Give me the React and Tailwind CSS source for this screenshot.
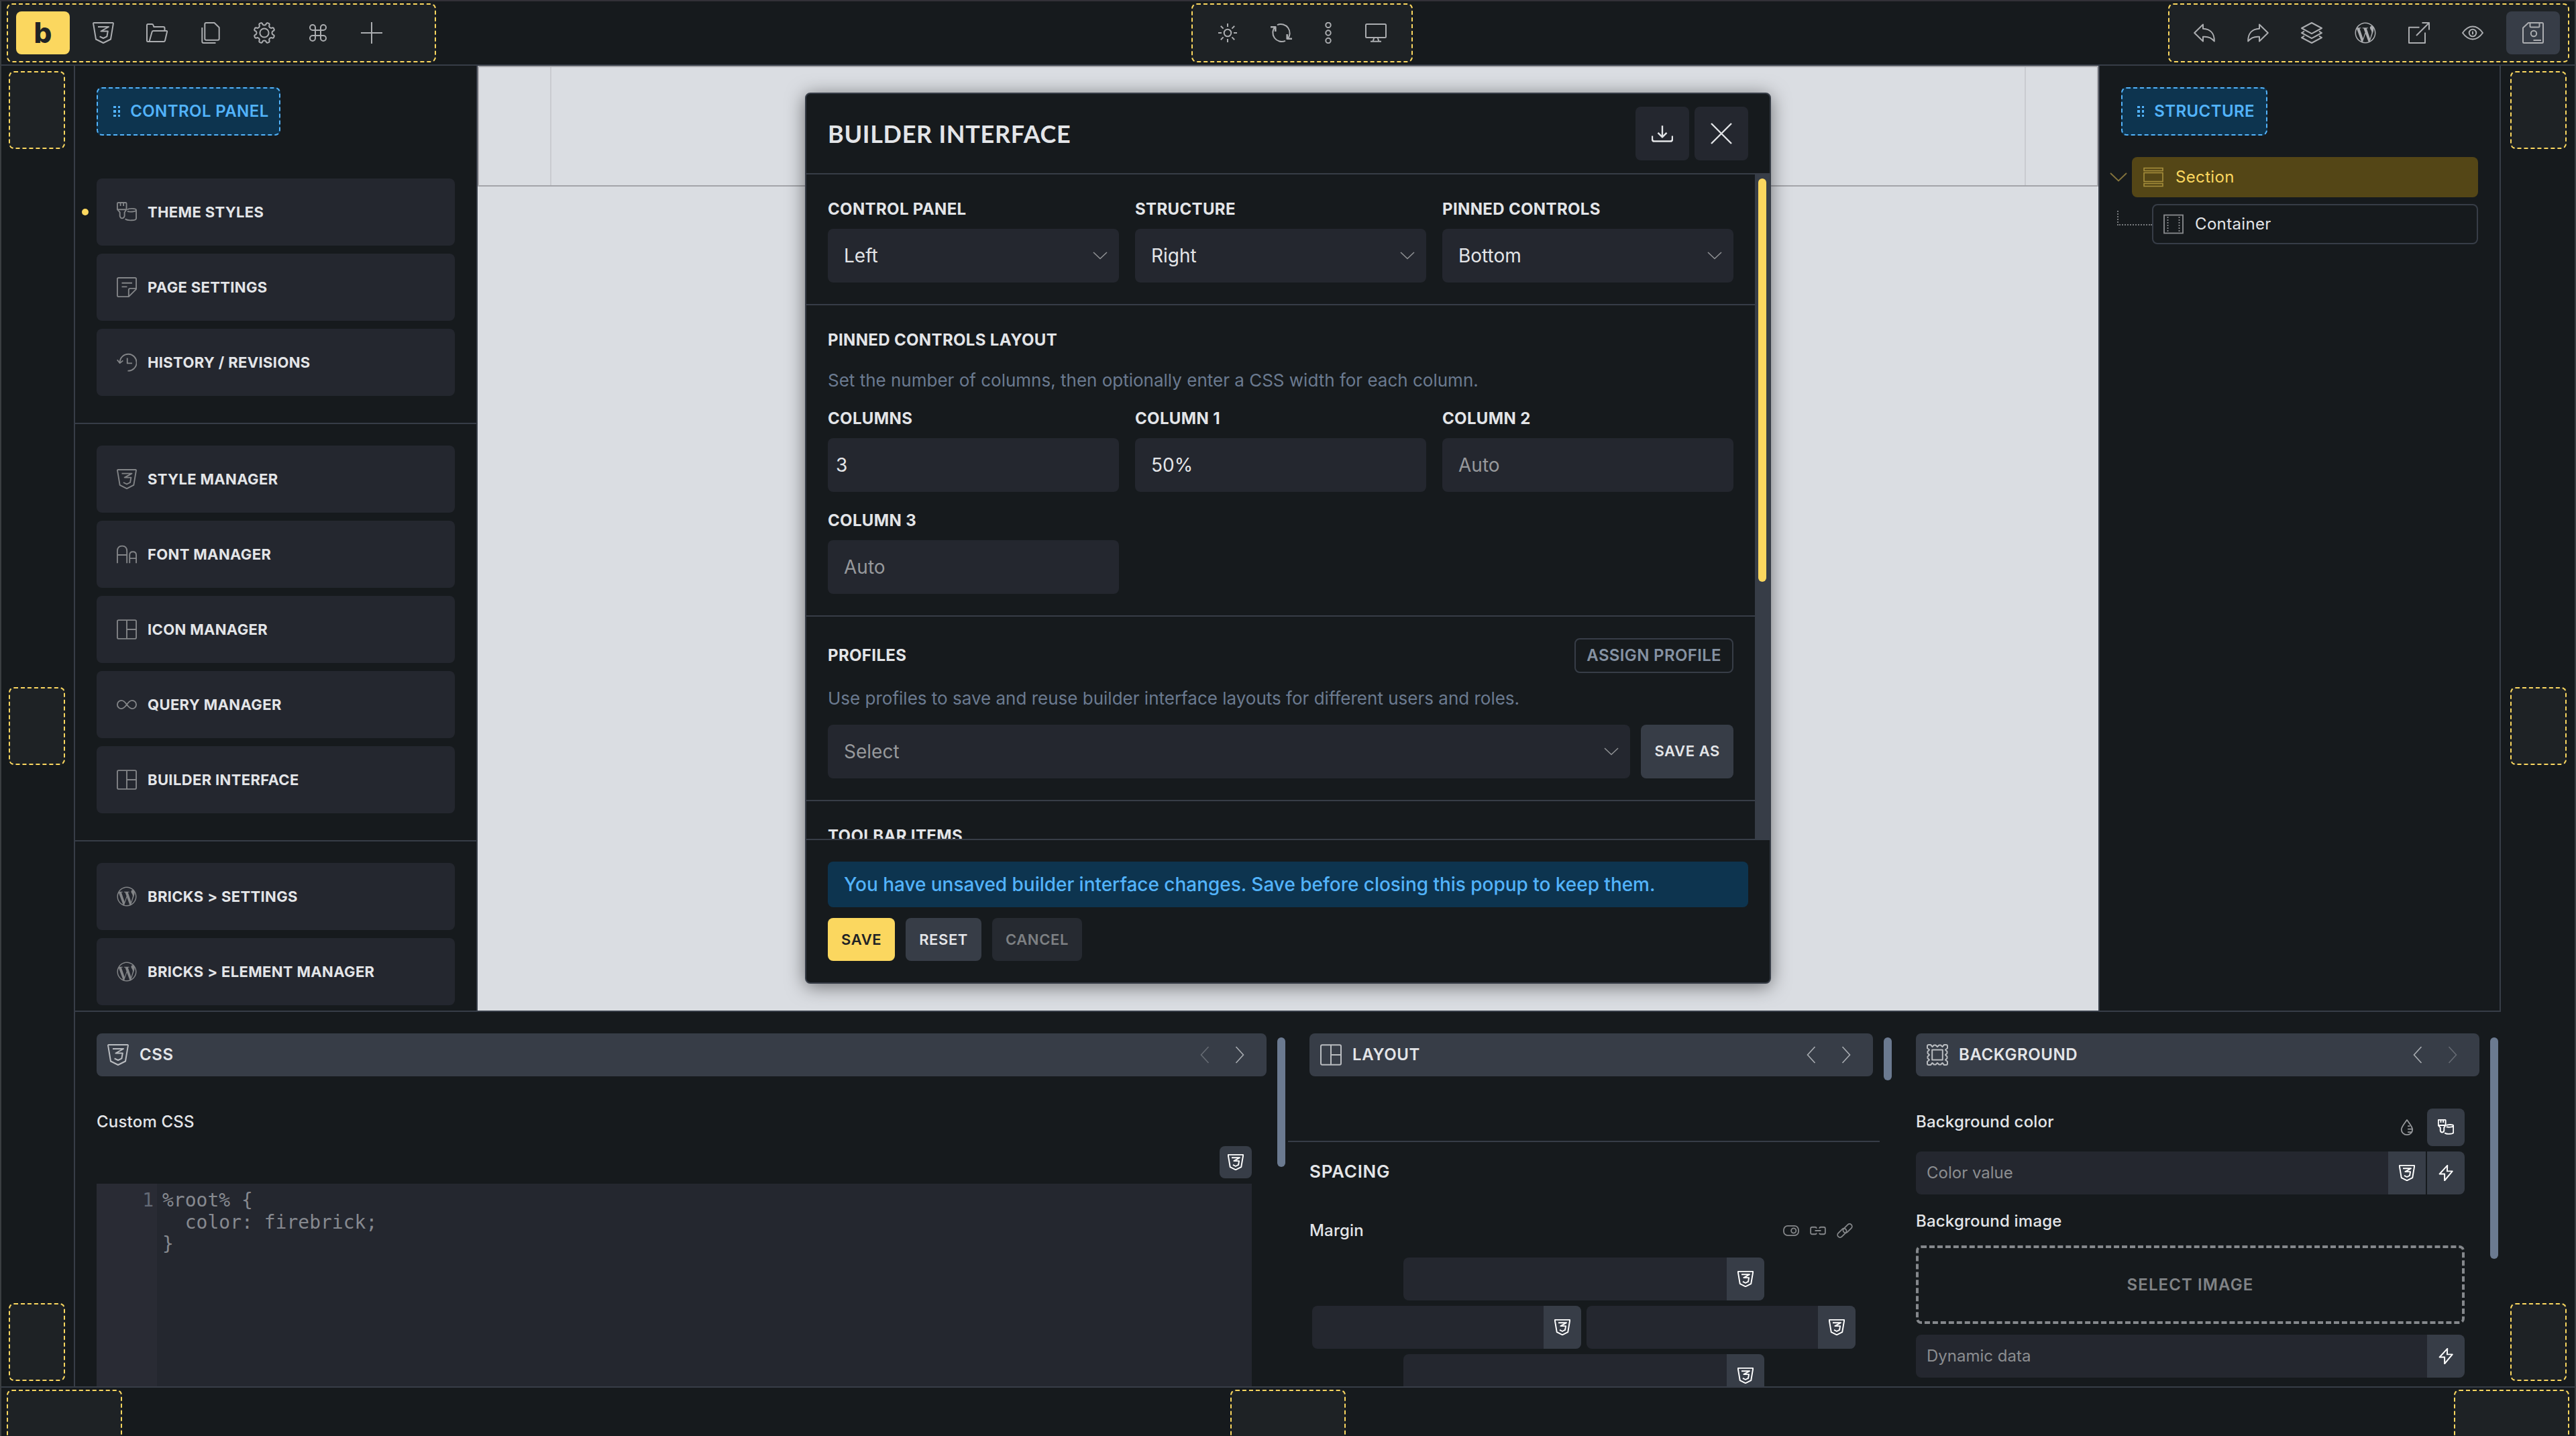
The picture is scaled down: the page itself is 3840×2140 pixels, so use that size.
import React from "react";
import { FaWordpressSimple } from "react-icons/fa";

/* Eight-toothed cog outline centred on (16, 16). */
const gearPath = (() => {
  const pts = [];
  for (let i = 0; i < 8; i++) {
    const a = 22.5 + i * 45;
    [[-9.5, 14.6], [-5, 15.6], [5, 15.6], [9.5, 14.6], [13, 12.2], [22.5, 11.4], [32, 12.2]].forEach(([d, r]) => {
      const t = ((a + d) * Math.PI) / 180;
      pts.push(`${(16 + r * Math.cos(t)).toFixed(2)} ${(16 + r * Math.sin(t)).toFixed(2)}`);
    });
  }
  return `M${pts.join("L")}Z`;
})();

const shapes = {
  css: <path d="M2 1H30Q31 1 30.9 2.2L27 25.5L16 31L5 25.5L1.1 2.2Q1 1 2 1ZM8 7H24L12.5 13.5H22.8L21.4 21.3L16 24L10.6 21.3" />,
  folder: <path d="M4.5 29H2.5Q1 29 1 27.5V4.5Q1 3 2.5 3H8.5Q10 3 10.5 4.5L11.3 7H25.5Q27.5 7 27.5 9V13M4.5 29L8.6 14.6Q9 13 10.7 13H30Q31.3 13 31 14.5L28 27.4Q27.6 29 26 29H4.5" />,
  pages: <path d="M3.3 8V29Q3.3 31 5.3 31H23.5M9.3 1H21.5L28.7 8V24.7Q28.7 26.7 26.7 26.7H9.3Q7.3 26.7 7.3 24.7V3Q7.3 1 9.3 1Z" />,
  gear: <><path d={gearPath} /><circle cx="16" cy="16" r="6.6" /></>,
  command: <path d="M20 8v16a4 4 0 1 0 4-4H8a4 4 0 1 0 4 4V8a4 4 0 1 0-4 4h16a4 4 0 1 0-4-4" />,
  plus: <path d="M16 0V32M0 16H32" />,
  sun: <><circle cx="16" cy="16" r="5.3" /><path d="M16 2v5M16 25v5M2 16h5M25 16h5M5.8 5.8l3.8 3.8M22.4 22.4l3.8 3.8M26.2 5.8l-3.8 3.8M9.6 22.4l-3.8 3.8" /></>,
  refresh: <><path d="M10 4.1A13.3 13.3 0 0 1 25.2 25.2M22 27.9A13.3 13.3 0 0 1 6.8 6.8" /><path strokeWidth="2.6" d="M0 7.2H7.3V14M24.7 18V24.8H32" /></>,
  dots: <><circle cx="16" cy="4.4" r="3.7" /><circle cx="16" cy="16" r="3.7" /><circle cx="16" cy="27.5" r="3.7" /></>,
  monitor: <><rect x="1" y="3" width="30" height="20" rx="1.5" /><path d="M13.5 23L11.5 28.7M18.5 23L20.5 28.7M8 28.8H24" /></>,
  undo: <path d="M14 3.5L1.2 16L14 28.5V21.8C21 21 26 22.5 30.8 28.5C31 17 25 10.2 14 9.8Z" />,
  redo: <path d="M18 3.5L30.8 16L18 28.5V21.8C11 21 6 22.5 1.2 28.5C1 17 7 10.2 18 9.8Z" />,
  layers: <path d="M16 1L31 9L16 17.2L1 9ZM5 13.6L1 16L16 24.2L31 16L27 13.6M5 20.6L1 23L16 31L31 23L27 20.6" />,
  external: <path d="M16.5 7.7H1V31H25V15.5M12 20L31 1M20.5 1H31V11.5" />,
  eye: <><path d="M1 16C6 9 11 6.6 16 6.6S26 9 31 16C26 23 21 25.4 16 25.4S6 23 1 16Z" /><circle cx="16" cy="16" r="5.3" /><path d="M16 13.8V18.2" /></>,
  save: <><path d="M9 1H29.5Q31 1 31 2.5V29.5Q31 31 29.5 31H2.5Q1 31 1 29.5V8.5ZM11.5 1V6Q11.5 7.5 13 7.5H24Q25.5 7.5 25.5 6V1" /><circle cx="17" cy="17" r="4.2" /><path d="M16.5 27H28" /></>,
  brush: <><path d="M2.5 1H14Q15.5 1 15.5 2.5V12L12.4 16.5V22.5Q11.4 26 8.4 26Q6 26 5 22.5V16.5L1 12V2.5Q1 1 2.5 1ZM1 12H15.5M6 1V6.5M10.8 1V6.5" /><path d="M17 12.6C18.5 9.8 31 9.8 31 13V26C31 30 17 30 13.5 27M31 13C30.5 16 19.5 16 17 14.8" /></>,
  note: <path d="M3 1H29Q31 1 31 3V19L19 31H3Q1 31 1 29V3Q1 1 3 1ZM19 31V20.5Q19 18 21.5 18H31M8 9.3H24.5M8 15.3H16.5" />,
  history: <path d="M5 16A13.3 13.3 0 1 1 17.5 29.5M0.8 12L5 17.2L10 13.2M16.8 9V17.5H24.5" />,
  fonts: <path d="M1 30V11Q1 2.8 8.6 2.8Q16.2 2.8 16.2 11V30M1 17H16.2M20.5 30V17.3Q20.5 12 25.7 12Q31 12 31 17.3V30M20.5 22.5H31" />,
  layout: <><rect x="1" y="1.2" width="30" height="29.6" rx="2" /><path d="M16 1V31M16 16H31" /></>,
  infinity: <path d="M7.5 9.5C11.5 9.5 13.5 12.5 16 16S20.5 22.5 24.5 22.5A6.5 6.5 0 0 0 24.5 9.5C20.5 9.5 18.5 12.5 16 16S11.5 22.5 7.5 22.5A6.5 6.5 0 0 1 7.5 9.5Z" />,
  download: <path d="M16 4.2V21M9.5 14.8L16 21.4L22.5 14.8M1 19.5V24.5Q1 27.5 4 27.5H28Q31 27.5 31 24.5V19.5" />,
  close: <path d="M1 1L31 31M31 1L1 31" />,
  stamp: <><path d="M3 1H6L8.5 4L11 1.5H13.5L16 4L18.5 1.5H21L23.5 4L26 1H29Q31 1 31 3V6L28 8.5L30.5 11V13.5L28 16L30.5 18.5V21L28 23.5L31 26V29Q31 31 29 31H26L23.5 28L21 30.5H18.5L16 28L13.5 30.5H11L8.5 28L6 31H3Q1 31 1 29V26L4 23.5L1.5 21V18.5L4 16L1.5 13.5V11L4 8.5L1 6V3Q1 1 3 1Z" /><rect x="8.2" y="8.6" width="15.6" height="14.8" /></>,
  drop: <path d="M16 1.4C10.5 9 5 15 5 20.4A11 10.4 0 0 0 27 20.4C27 15 21.5 9 16 1.4ZM17.5 13.5H22M17.5 19.5H26M17.5 25.5H24.5" />,
  bolt: <path d="M19 1.2L3.5 18H13.5V31L29 12.5H18.5Z" />,
  toggle: <><rect x="1.3" y="6.5" width="29.4" height="19" rx="8" /><circle cx="21" cy="16" r="4.8" /></>,
  chain: <path d="M13 20.5Q13 23 10.5 23H4.5Q1.5 23 1.5 20V12Q1.5 9 4.5 9H10.5Q13 9 13 11.5M19 11.5Q19 9 21.5 9H27.5Q30.5 9 30.5 12V20Q30.5 23 27.5 23H21.5Q19 23 19 20.5M10 16H22" />,
  link: <><rect x="-10.5" y="-5" width="21" height="10" rx="5" transform="translate(10.5 20.5) rotate(-45)" /><rect x="-10.5" y="-5" width="21" height="10" rx="5" transform="translate(21.5 11.5) rotate(-45)" /></>,
};

function Icon({ name, className = "size-8", w = 2 }) {
  return (
    <svg viewBox="0 0 32 32" className={`shrink-0 ${className}`} fill="none" stroke="currentColor" strokeWidth={w} strokeLinejoin="round">
      {shapes[name]}
    </svg>
  );
}

const Chevron = ({ className = "w-5 h-[10px]" }) => (
  <svg viewBox="0 0 20 10" className={`shrink-0 overflow-visible ${className}`} fill="none" stroke="currentColor" strokeWidth="1.6"><path d="M0 0L10 9.5L20 0" /></svg>
);

const Arrow = ({ left, dim }) => (
  <svg viewBox="0 0 12 24" className={`h-6 w-3 overflow-visible ${dim ? "text-[#666b73]" : "text-[#a9adb2]"}`} fill="none" stroke="currentColor" strokeWidth="1.6">
    <path d={left ? "M11.5 0L0.5 12L11.5 24" : "M0.5 0L11.5 12L0.5 24"} />
  </svg>
);

const Zone = ({ className = "", children }) => (
  <div className={`flex shrink-0 items-center rounded-lg border-2 border-dashed border-[#fbd75f] bg-[#1e2225] ${className}`}>{children}</div>
);

const Tool = ({ name, className = "w-20" }) => (
  <div className={`flex h-16 items-center justify-center ${className}`}>
    {name === "wordpress" ? <FaWordpressSimple className="size-8" /> : <Icon name={name} />}
  </div>
);

const Toolbar = () => (
  <header className="flex h-24 shrink-0 items-center justify-between border-b-2 border-[#373d47] px-2 text-[#abadb0]">
    <Zone className="h-[88px] w-[640px] pl-3">
      <div className="mr-[10px] flex h-16 w-20 items-center justify-center rounded-lg bg-[#fbd75f] text-[42px] leading-none font-extrabold text-[#1f2326]">b</div>
      {["css", "folder", "pages", "gear", "command", "plus"].map((n) => <Tool key={n} name={n} />)}
    </Zone>
    <Zone className="h-[88px] px-3">
      <Tool name="sun" /><Tool name="refresh" /><Tool name="dots" className="w-[60px]" /><Tool name="monitor" className="w-[82px]" />
    </Zone>
    <Zone className="h-[88px] px-3">
      {["undo", "redo", "layers", "wordpress", "external", "eye"].map((n) => <Tool key={n} name={n} />)}
      <Tool name="save" className="ml-[10px] w-20 rounded-lg bg-[#373d47]" />
    </Zone>
  </header>
);

const Gutter = ({ className = "" }) => (
  <aside className={`flex shrink-0 flex-col justify-between py-2 ${className}`}>
    {[0, 1, 2].map((i) => <Zone key={i} className="h-[116px] w-[84px]" />)}
  </aside>
);

const Chip = ({ children, className = "" }) => (
  <div className={`flex h-[72px] shrink-0 items-center rounded-lg border-2 border-dashed border-[#52b3fb] bg-[#0d344f] text-2xl font-semibold tracking-[0.4px] text-[#52b3fb] ${className}`}>
    <div className="mr-[15px] grid grid-cols-2 gap-x-[3px] gap-y-[3px]">
      {[0, 1, 2, 3, 4, 5].map((i) => <span key={i} className="size-[3.6px] bg-current" />)}
    </div>
    {children}
  </div>
);

const groups = [
  [["brush", "THEME STYLES"], ["note", "PAGE SETTINGS"], ["history", "HISTORY / REVISIONS"]],
  [["css", "STYLE MANAGER"], ["fonts", "FONT MANAGER"], ["layout", "ICON MANAGER"], ["infinity", "QUERY MANAGER"], ["layout", "BUILDER INTERFACE"]],
  [["wordpress", "BRICKS > SETTINGS"], ["wordpress", "BRICKS > ELEMENT MANAGER"]],
];

const ControlPanel = () => (
  <section className="flex w-[600px] shrink-0 flex-col overflow-hidden border-r-2 border-[#373d47] pt-8">
    <Chip className="ml-8 w-[274px] pl-[23px]">CONTROL PANEL</Chip>
    <div className="mt-8">
      {groups.map((items, g) => (
        <div key={g} className={`flex flex-col gap-3 px-8 pt-8 ${g < 2 ? "border-b-2 border-[#373d47] pb-10" : ""}`}>
          {items.map(([icon, label]) => (
            <div key={label} className="relative flex h-[100px] shrink-0 items-center gap-4 rounded-lg bg-[#24272f] pl-[30px] text-[22px] font-bold tracking-[0.35px] text-[#e3e5e8]">
              {label === "THEME STYLES" && <span className="absolute -left-[22px] size-[10px] rounded-full bg-[#fbd75f]" />}
              {icon === "wordpress" ? <FaWordpressSimple className="size-[30px] text-[#838588]" /> : <Icon name={icon} className="size-[30px] text-[#838588]" />}
              {label}
            </div>
          ))}
        </div>
      ))}
    </div>
  </section>
);

const Canvas = () => (
  <section className="flex-1 bg-[#dadde2]">
    <div className="flex h-[180px] justify-center border-2 border-[#a3a4a9]">
      <div className="w-[2200px] border-x-2 border-[#c9cbd0]" />
    </div>
  </section>
);

const StructurePanel = () => (
  <section className="w-[600px] shrink-0 border-x-2 border-[#373d47] pt-8 pr-8 pl-4 text-2xl tracking-[0.35px]">
    <Chip className="ml-4 w-[218px] pl-[22px]">STRUCTURE</Chip>
    <div className="mt-8 flex items-center text-[#fbd75f]">
      <Chevron className="mr-2 h-3 w-6 text-[#83733c]" />
      <div className="flex h-[60px] flex-1 items-center gap-[18px] rounded-lg bg-[#544616] pl-[17px]">
        <svg viewBox="0 0 30 30" className="size-[30px] text-[#a68e3b]" fill="none" stroke="currentColor" strokeWidth="1.6">
          <rect x="1" y="1.5" width="28" height="4" /><rect x="1" y="8.5" width="28" height="13" /><rect x="1" y="24.5" width="28" height="4" />
        </svg>
        Section
      </div>
    </div>
    <div className="mt-[10px] flex text-[#e3e5e8]">
      <div className="mt-[10px] ml-[10px] h-[22px] w-[52px] border-b-2 border-l-2 border-dotted border-[#777a7d]" />
      <div className="flex h-[60px] flex-1 items-center gap-[17px] rounded-lg border-2 border-[#373d47] pl-[15px]">
        <svg viewBox="0 0 30 30" className="size-[30px] text-[#8a8c8f]" fill="none" stroke="currentColor" strokeWidth="1.8">
          <rect x="1" y="1.5" width="28" height="27" /><path d="M6.5 4V27M23.5 4V27" strokeDasharray="2 2" />
        </svg>
        Container
      </div>
    </div>
  </section>
);

const PinnedColumn = ({ icon, title, dimLeft, dimRight, thumb, width, children }) => (
  <section className={`relative flex shrink-0 flex-col overflow-hidden pt-8 ${width}`}>
    <div className="mx-8 flex h-16 shrink-0 items-center rounded-lg bg-[#373d47] pr-[34px] pl-4 text-2xl font-semibold tracking-[0.6px] text-[#e3e5e8]">
      <Icon name={icon} className="mr-4 size-8 text-[#b9bcc0]" />
      <span className="flex-1">{title}</span>
      <div className="flex gap-10"><Arrow left dim={dimLeft} /><Arrow dim={dimRight} /></div>
    </div>
    {children}
    <span className={`absolute top-[38px] right-1 w-3 rounded-full bg-[#6b7a90] ${thumb}`} />
  </section>
);

const VarButton = ({ name = "css", className = "h-16 w-14" }) => (
  <div className={`flex shrink-0 items-center justify-center bg-[#373d47] text-white ${className}`}>
    <Icon name={name} className="size-6" w={2.6} />
  </div>
);

const SideInput = ({ className = "" }) => (
  <div className={`flex h-16 justify-end overflow-hidden rounded-lg bg-[#24272f] ${className}`}><VarButton /></div>
);

const BottomPanel = () => (
  <div className="flex h-[558px] shrink-0 overflow-hidden text-2xl font-medium tracking-[0.2px] text-[#e3e5e8]">
    <PinnedColumn icon="css" title="CSS" dimLeft thumb="h-[193px]" width="w-[1808px]">
      <div className="mr-[54px] ml-8 flex flex-1 flex-col pt-[52px]">
        <div className="leading-8">Custom CSS</div>
        <VarButton className="mt-5 size-12 self-end rounded-lg" />
        <div className="mt-2 flex flex-1 bg-[#24272f] font-['DejaVu_Sans_Mono',monospace] text-[28px] leading-[32.6px] font-normal tracking-normal text-[#86898f]">
          <div className="w-[90px] bg-[#292b34] pt-[9px] pr-[5px] text-right text-[#646a76]">1</div>
          <pre className="pt-[9px] pl-2 font-['DejaVu_Sans_Mono',monospace]">{"%root% {\n  color: firebrick;\n}"}</pre>
        </div>
      </div>
    </PinnedColumn>
    <PinnedColumn icon="layout" title="LAYOUT" thumb="h-16" width="w-[904px]">
      <div className="mt-24 mr-[22px] border-t-2 border-[#373d47] pt-7 pr-8 pl-8">
        <div className="text-[26px] leading-8 font-semibold tracking-[0.75px]">SPACING</div>
        <div className="mt-14 flex h-8 items-center pr-2">
          <span className="flex-1">Margin</span>
          <div className="flex gap-4 text-[#85878a]">
            <Icon name="toggle" className="size-6" w={2.4} /><Icon name="chain" className="size-6" w={2.4} /><Icon name="link" className="size-6" w={2.4} />
          </div>
        </div>
        <div className="mt-6 flex flex-col items-center gap-2">
          <SideInput className="w-[538px]" />
          <div className="flex gap-2"><SideInput className="w-[401px]" /><SideInput className="w-[401px]" /></div>
          <SideInput className="w-[538px]" />
        </div>
      </div>
    </PinnedColumn>
    <PinnedColumn icon="stamp" title="BACKGROUND" dimRight thumb="h-[330px]" width="w-[904px]">
      <div className="mr-[54px] ml-8 flex flex-col pt-12">
        <div className="flex h-14">
          <span className="flex-1 pt-1 leading-8">Background color</span>
          <div className="flex w-[60px] items-center justify-center text-[#97999c]"><Icon name="drop" className="size-6" w={2.4} /></div>
          <VarButton name="brush" className="size-14 rounded-lg" />
        </div>
        <div className="mt-2 flex h-16 gap-[2px] overflow-hidden rounded-lg">
          <div className="-mr-[2px] flex flex-1 items-center bg-[#24272f] pl-4 font-normal tracking-normal text-[#8b8d90]">Color value</div>
          <VarButton /><VarButton name="bolt" />
        </div>
        <div className="mt-6 leading-8">Background image</div>
        <div className="mt-5 flex h-[117px] items-center justify-center rounded-lg border-4 border-dashed border-[#85888c] font-semibold tracking-[1.1px] text-[#808386]">SELECT IMAGE</div>
        <div className="mt-4 flex h-16 overflow-hidden rounded-lg">
          <div className="flex flex-1 items-center bg-[#24272f] pl-4 font-normal tracking-normal text-[#8b8d90]">Dynamic data</div>
          <VarButton name="bolt" />
        </div>
      </div>
    </PinnedColumn>
  </div>
);

const Field = ({ label, value, select, muted, pad = "pl-6" }) => (
  <div>
    <div className="leading-6">{label}</div>
    <div className={`mt-[17px] flex h-20 items-center justify-between rounded-lg bg-[#24272f] pr-[18px] text-[28px] font-normal tracking-normal ${pad} ${muted ? "text-[#97999c]" : ""}`}>
      <span className="pt-[2px]">{value}</span>
      {select && <Chevron className="h-[10px] w-5 text-[#8f9194]" />}
    </div>
  </div>
);

const Button = ({ className, children }) => (
  <div className={`flex items-center rounded-lg px-5 text-[22px] font-semibold tracking-[0.6px] ${className}`}>{children}</div>
);

const Modal = () => (
  <div className="flex h-[1328px] w-[1440px] flex-col overflow-hidden rounded-lg border-2 border-[#373d47] bg-[#161a1d] text-[#e3e5e8] shadow-[0_4px_28px_rgba(0,0,0,0.5)]">
    <div className="flex h-[120px] shrink-0 items-center gap-2 border-b-2 border-[#373d47] px-8">
      <div className="flex-1 font-[Lato] text-4xl font-bold tracking-[0.7px]">BUILDER INTERFACE</div>
      <div className="flex size-20 items-center justify-center rounded-lg bg-[#24272f]"><Icon name="download" w={2.4} /></div>
      <div className="flex size-20 items-center justify-center rounded-lg bg-[#24272f]"><Icon name="close" w={2.4} /></div>
    </div>
    <div className="flex h-[990px] shrink-0 overflow-hidden">
      <div className="flex-1 text-2xl font-bold tracking-[0.35px]">
        <div className="grid grid-cols-3 gap-6 border-b-2 border-[#373d47] px-8 pt-10 pb-8">
          <Field label="CONTROL PANEL" value="Left" select />
          <Field label="STRUCTURE" value="Right" select />
          <Field label="PINNED CONTROLS" value="Bottom" select />
        </div>
        <div className="border-b-2 border-[#373d47] px-8 pt-10 pb-8">
          <div className="leading-6">PINNED CONTROLS LAYOUT</div>
          <div className="mt-8 text-[26px] leading-8 font-normal tracking-normal text-[#6b7a90]">Set the number of columns, then optionally enter a CSS width for each column.</div>
          <div className="mt-[29px] grid grid-cols-3 gap-x-6 gap-y-[31px]">
            <Field label="COLUMNS" value="3" pad="pl-3" />
            <Field label="COLUMN 1" value="50%" />
            <Field label="COLUMN 2" value="Auto" muted />
            <Field label="COLUMN 3" value="Auto" muted />
          </div>
        </div>
        <div className="border-b-2 border-[#373d47] px-8 pt-8 pb-8">
          <div className="flex items-center justify-between">
            PROFILES
            <div className="flex h-[52px] items-center rounded-lg border-2 border-[#373d47] px-4 font-semibold text-[#8592a3]">ASSIGN PROFILE</div>
          </div>
          <div className="mt-[22px] text-[26px] leading-8 font-normal tracking-normal text-[#6b7a90]">Use profiles to save and reuse builder interface layouts for different users and roles.</div>
          <div className="mt-[23px] flex gap-4">
            <div className="flex h-20 flex-1 items-center justify-between rounded-lg bg-[#24272f] pr-[18px] pl-6 text-[28px] font-normal tracking-normal text-[#97999c]">
              <span className="pt-[2px]">Select</span>
              <Chevron className="h-[10px] w-5 text-[#8f9194]" />
            </div>
            <Button className="h-20 bg-[#373d47]">SAVE AS</Button>
          </div>
        </div>
        <div className="px-8 pt-10 leading-6">TOOLBAR ITEMS</div>
      </div>
      <div className="flex w-[22px] justify-center bg-[#373d47] pt-[6px] pr-px">
        <div className="h-[601px] w-3 rounded-full bg-[#fbd75f]" />
      </div>
    </div>
    <div className="flex-1 border-t-2 border-[#373d47] px-8 pt-8">
      <div className="flex h-[68px] items-center rounded-lg bg-[#0d344f] pl-6 text-[28px] font-medium tracking-[-0.03px] text-[#52b3fb]">
        You have unsaved builder interface changes. Save before closing this popup to keep them.
      </div>
      <div className="mt-4 flex gap-4">
        <Button className="h-16 bg-[#fbd75f] text-[#1f2326]">SAVE</Button>
        <Button className="h-16 bg-[#373d47]">RESET</Button>
        <Button className="h-16 bg-[#262a31] text-[#7d8083]">CANCEL</Button>
      </div>
    </div>
  </div>
);

export default function App() {
  return (
    <div className="relative flex h-[2140px] w-[3840px] flex-col overflow-hidden border-x-2 border-t-2 border-x-[#3a3e41] border-t-[#333138] bg-[#161a1d] font-[Inter,sans-serif] text-[#e3e5e8]">
      <Toolbar />
      <div className="flex h-[1970px] shrink-0 border-b-2 border-[#373d47]">
        <Gutter className="w-[110px] border-r-2 border-[#373d47] pl-[11px]" />
        <main className="flex min-w-0 flex-1 flex-col">
          <div className="flex h-[1410px] shrink-0 border-b-2 border-[#373d47]">
            <ControlPanel />
            <Canvas />
            <StructurePanel />
          </div>
          <BottomPanel />
        </main>
        <Gutter className="w-[110px] pl-[14px]" />
      </div>
      <footer className="flex shrink-0 items-start justify-between px-2 pt-[3px]">
        {[0, 1, 2].map((i) => <Zone key={i} className="h-[88px] w-[172px]" />)}
      </footer>
      <div className="absolute inset-0 flex items-start justify-center pt-[136px]">
        <Modal />
      </div>
    </div>
  );
}
